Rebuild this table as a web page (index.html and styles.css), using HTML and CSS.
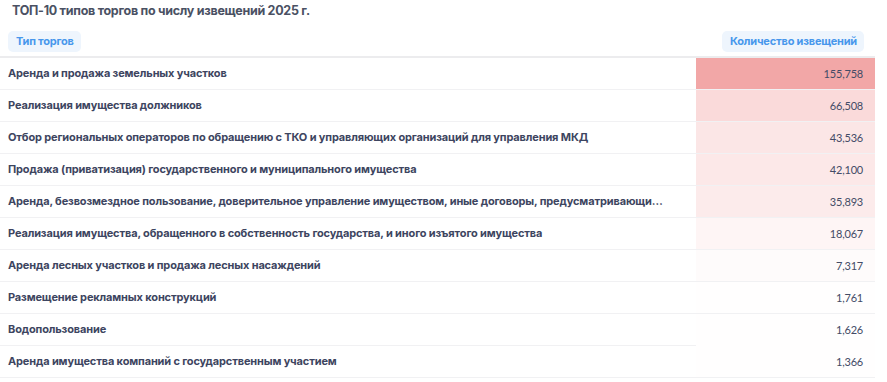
FILE: index.html
```html
<!DOCTYPE html>
<html lang="ru">
<head>
<meta charset="utf-8">
<link rel="stylesheet" href="styles.css">
</head>
<body>
<div class="widget">
  <div class="title">ТОП-10 типов торгов по числу извещений 2025 г.</div>
  <table class="grid">
    <colgroup><col class="c-name"><col class="c-val"></colgroup>
    <thead>
      <tr>
        <th class="h-name"><span class="pill">Тип торгов</span></th>
        <th class="h-val"><span class="pill">Количество извещений</span></th>
      </tr>
    </thead>
    <tbody>
      <tr><td class="name">Аренда и продажа земельных участков</td><td class="val" style="background: rgba(230,80,80,0.5)">155,758</td></tr>
      <tr><td class="name">Реализация имущества должников</td><td class="val" style="background: rgba(230,80,80,0.213)">66,508</td></tr>
      <tr><td class="name">Отбор региональных операторов по обращению с ТКО и управляющих организаций для управления МКД</td><td class="val" style="background: rgba(230,80,80,0.14)">43,536</td></tr>
      <tr><td class="name">Продажа (приватизация) государственного и муниципального имущества</td><td class="val" style="background: rgba(230,80,80,0.135)">42,100</td></tr>
      <tr><td class="name">Аренда, безвозмездное пользование, доверительное управление имуществом, иные договоры, предусматривающие переход прав владения и пользования</td><td class="val" style="background: rgba(230,80,80,0.115)">35,893</td></tr>
      <tr><td class="name">Реализация имущества, обращенного в собственность государства, и иного изъятого имущества</td><td class="val" style="background: rgba(230,80,80,0.058)">18,067</td></tr>
      <tr><td class="name">Аренда лесных участков и продажа лесных насаждений</td><td class="val" style="background: rgba(230,80,80,0.0235)">7,317</td></tr>
      <tr><td class="name">Размещение рекламных конструкций</td><td class="val" style="background: rgba(230,80,80,0.0057)">1,761</td></tr>
      <tr><td class="name">Водопользование</td><td class="val nob" style="background: rgba(230,80,80,0.005)">1,626</td></tr>
      <tr><td class="name">Аренда имущества компаний с государственным участием</td><td class="val" style="background: rgba(230,80,80,0.004)">1,366</td></tr>
    </tbody>
  </table>
</div>
</body>
</html>
```
FILE: styles.css
```css
html, body {
  margin: 0;
  padding: 0;
  background: #ffffff;
}
body {
  font-family: "Inter", "Noto Sans", sans-serif;
  color: #3d4560;
}
.widget {
  width: 878px;
}
.title {
  font-size: 12.5px;
  font-weight: 700;
  color: #4a5163;
  padding: 3px 0 0 12px;
  height: 19px;
  line-height: 16px;
  letter-spacing: -0.28px;
}
.grid {
  width: 875px;
  border-collapse: collapse;
  table-layout: fixed;
}
.c-name { width: 696px; }
.c-val { width: 179px; }
thead th {
  height: 34px;
  padding: 0;
  vertical-align: top;
  border-bottom: 2px solid #ececee;
}
.h-name { text-align: left; padding-left: 8px; }
.h-val { text-align: right; padding-right: 11px; }
.pill {
  display: inline-block;
  margin-top: 9px;
  height: 21px;
  line-height: 21px;
  padding: 0 7px 0 8px;
  border-radius: 5px;
  background: #eef5fd;
  color: #4797ec;
  font-size: 11px;
  font-weight: 700;
  letter-spacing: -0.2px;
}
tbody td {
  height: 30px;
  padding: 0 0 1px 0;
  border-bottom: 1px solid #f1f1f3;
  vertical-align: middle;
}
.name {
  padding-left: 8px;
  padding-right: 28px;
  font-size: 11px;
  font-weight: 700;
  letter-spacing: -0.14px;
  color: #3d4560;
  white-space: nowrap;
  overflow: hidden;
  text-overflow: ellipsis;
}
.val {
  text-align: right;
  padding-right: 12px;
  font-family: "Lato", "Noto Sans", sans-serif;
  font-size: 11px;
  letter-spacing: -0.2px;
  color: #434b66;
}
.val.nob {
  border-bottom-color: transparent;
}
```
